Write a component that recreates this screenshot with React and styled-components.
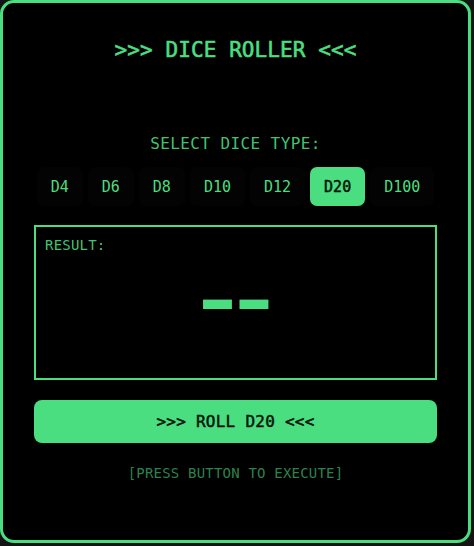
import React, { useState } from "react";
import styled, { createGlobalStyle } from "styled-components";

const GREEN = "#4ade80";
const INK = "#04140a";
const MONO = `"DejaVu Sans Mono", "Liberation Mono", monospace`;

const GlobalStyle = createGlobalStyle`
  html, body {
    margin: 0;
    padding: 0;
    background: #141414;
  }
  body {
    font-family: ${MONO};
  }
  * { box-sizing: border-box; }
`;

const Card = styled.main`
  width: 471px;
  min-height: 543px;
  background: #000;
  border: 3px solid ${GREEN};
  border-radius: 14px;
  padding: 33px 31px 0;
  display: flex;
  flex-direction: column;
  align-items: stretch;
  color: ${GREEN};
  font-family: ${MONO};
`;

const Title = styled.h1`
  margin: 0 0 68px;
  font-size: 21px;
  line-height: 28px;
  font-weight: 400;
  -webkit-text-stroke: 0.6px ${GREEN};
  letter-spacing: 0.1px;
  text-align: center;
  color: ${GREEN};
`;

const SectionLabel = styled.div`
  margin: 0 0 11px;
  font-size: 16px;
  line-height: 24px;
  letter-spacing: 0.4px;
  text-align: center;
  color: rgba(74, 222, 128, 0.9);
`;

const DiceRow = styled.div`
  display: flex;
  justify-content: center;
  gap: 5px;
  margin-bottom: 19px;
`;

const DieButton = styled.button`
  height: 39px;
  padding: 0 14px;
  border: none;
  border-radius: 7px;
  background: ${(p) => (p.$active ? GREEN : "#020302")};
  color: ${(p) => (p.$active ? INK : GREEN)};
  -webkit-text-stroke: ${(p) => (p.$active ? `0.5px ${INK}` : "0")};
  font-family: ${MONO};
  font-size: 15px;
  font-weight: 400;
  cursor: pointer;
  display: flex;
  align-items: center;
  justify-content: center;
`;

const ResultBox = styled.section`
  height: 155px;
  border: 2px solid ${GREEN};
  padding: 8px 9px;
  display: flex;
  flex-direction: column;
  margin-bottom: 20px;
`;

const ResultLabel = styled.div`
  font-size: 14px;
  line-height: 20px;
  letter-spacing: 0.2px;
  color: rgba(74, 222, 128, 0.9);
`;

const ResultValue = styled.div`
  flex: 1;
  display: flex;
  align-items: center;
  justify-content: center;
  margin-bottom: 24px;
`;

/* wide, tight pair of bars for the empty result */
const ValueText = styled.span`
  display: inline-block;
  font-size: 66px;
  line-height: 66px;
  font-weight: 700;
  letter-spacing: -14px;
  padding-right: 14px;
  transform: scaleX(1.42);
  color: ${GREEN};
`;

const RollButton = styled.button`
  height: 43px;
  border: none;
  border-radius: 8px;
  background: ${GREEN};
  color: ${INK};
  -webkit-text-stroke: 0.5px ${INK};
  font-family: ${MONO};
  font-size: 16px;
  font-weight: 400;
  letter-spacing: 0.25px;
  cursor: pointer;
  margin-bottom: 20px;
`;

const Hint = styled.div`
  font-size: 14px;
  line-height: 20px;
  letter-spacing: 0.2px;
  text-align: center;
  color: rgba(74, 222, 128, 0.6);
`;

const DICE = [4, 6, 8, 10, 12, 20, 100];

export default function App() {
  const [sides, setSides] = useState(20);
  const [result, setResult] = useState(null);

  return (
    <>
      <GlobalStyle />
      <Card>
        <Title>&gt;&gt;&gt; DICE ROLLER &lt;&lt;&lt;</Title>
        <SectionLabel>SELECT DICE TYPE:</SectionLabel>
        <DiceRow>
          {DICE.map((d) => (
            <DieButton key={d} $active={d === sides} onClick={() => setSides(d)}>
              D{d}
            </DieButton>
          ))}
        </DiceRow>
        <ResultBox>
          <ResultLabel>RESULT:</ResultLabel>
          <ResultValue>
            {result === null ? <ValueText>--</ValueText> : <ValueText>{result}</ValueText>}
          </ResultValue>
        </ResultBox>
        <RollButton onClick={() => setResult(1 + Math.floor(Math.random() * sides))}>
          &gt;&gt;&gt; ROLL D{sides} &lt;&lt;&lt;
        </RollButton>
        <Hint>[PRESS BUTTON TO EXECUTE]</Hint>
      </Card>
    </>
  );
}
